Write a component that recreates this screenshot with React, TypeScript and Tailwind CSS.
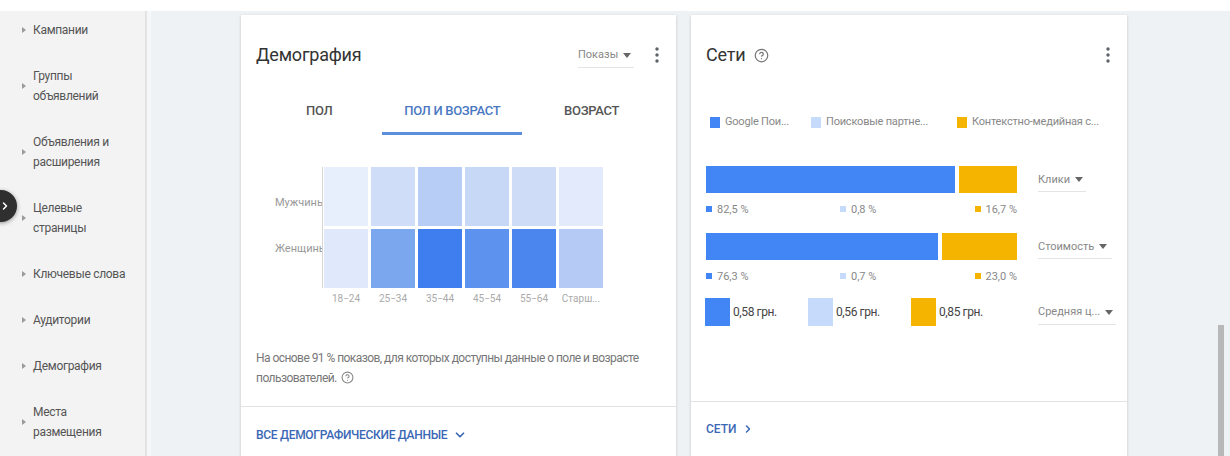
import React from "react";
import { CircleHelp, ChevronDown, ChevronRight } from "lucide-react";

const navItems = [
  ["Кампании"],
  ["Группы", "объявлений"],
  ["Объявления и", "расширения"],
  ["Целевые", "страницы"],
  ["Ключевые слова"],
  ["Аудитории"],
  ["Демография"],
  ["Места", "размещения"],
];

const ages = ["18−24", "25−34", "35−44", "45−54", "55−64", "Старш..."];

const heat = [
  {
    label: "Мужчины",
    pos: "items-end pb-[16px]",
    cells: ["#e7eefc", "#d0ddf8", "#b7cdf5", "#c7d8f7", "#cedcf7", "#e2eafb"],
  },
  {
    label: "Женщины",
    pos: "items-start pt-[13px]",
    cells: ["#e0e9fb", "#7ba7ef", "#3f7eee", "#5e92ef", "#4a86ee", "#b5cbf6"],
  },
];

const BLUE = "#4285f4";
const LIGHT = "#c6dafc";
const YELLOW = "#f4b400";

const bars = [
  { metric: "Клики", values: [80.5, 0.8, 18.7], text: ["82,5 %", "0,8 %", "16,7 %"] },
  { metric: "Стоимость", values: [75, 0.7, 24.3], text: ["76,3 %", "0,7 %", "23,0 %"] },
];

function Kebab() {
  return (
    <svg width="4" height="16" viewBox="0 0 4 16" className="text-[#5f6368]">
      <circle cx="2" cy="2" r="1.7" fill="currentColor" />
      <circle cx="2" cy="8" r="1.7" fill="currentColor" />
      <circle cx="2" cy="14" r="1.7" fill="currentColor" />
    </svg>
  );
}

function Caret() {
  return (
    <svg width="8" height="5" viewBox="0 0 8 5" className="text-[#666] shrink-0">
      <path d="M0 0h8L4 5z" fill="currentColor" />
    </svg>
  );
}

function Dropdown({ label, w }: { label: string; w: string }) {
  return (
    <div className={`flex items-center gap-[5px] border-b border-[#e4e4e4] pb-[3px] text-[11px] text-[#888] ${w}`}>
      <span className="truncate">{label}</span>
      <Caret />
    </div>
  );
}

function Sidebar() {
  return (
    <aside className="w-[147px] shrink-0 bg-[#f3f3f3] border-r-2 border-[#e3e3e3] relative">
      <ul className="-mt-[4px]">
        {navItems.map((lines) => (
          <li key={lines.join(" ")} className="flex items-center py-[13px] pl-[22px]">
            <svg width="4" height="6" viewBox="0 0 4 6" className="mr-[7px] shrink-0 text-[#9a9a9a]">
              <path d="M0 0l4 3-4 3z" fill="currentColor" />
            </svg>
            <div className="text-[12px] leading-[20px] text-[#555] tracking-[-0.3px]">
              {lines.map((l) => (
                <div key={l}>{l}</div>
              ))}
            </div>
          </li>
        ))}
      </ul>
      {/* collapse toggle poking in from the left edge */}
      <div className="absolute -left-[15px] top-[179px] w-[32px] h-[32px] rounded-full bg-[#2f2f2f] shadow-[0_1px_4px_rgba(0,0,0,0.4)] flex items-center justify-end pr-[6px]">
        <ChevronRight size={12} strokeWidth={3} className="text-white" />
      </div>
    </aside>
  );
}

function DemographyCard() {
  return (
    <section className="w-[435px] shrink-0 bg-white shadow-[0_1px_3px_rgba(0,0,0,0.18)] flex flex-col">
      <header className="flex items-center pl-[15px] pr-[17px] pt-[28px]">
        <h2 className="text-[18px] leading-[24px] text-[#333] flex-1 tracking-[-0.2px]">Демография</h2>
        <Dropdown label="Показы" w="w-[56px] mr-[21px] mt-[4px]" />
        <Kebab />
      </header>

      <nav className="flex mt-[20px] px-[15px] text-[13px] leading-[18px] font-medium tracking-[-0.3px]">
        <div className="w-[131px] text-center pt-[14px] pb-[15px] text-[#555]">ПОЛ</div>
        <div className="w-[145px] text-center pt-[14px] pb-[12px] text-[#4a78c2] border-b-[3px] border-[#5b8fdc]">
          ПОЛ И ВОЗРАСТ
        </div>
        <div className="w-[144px] text-center pt-[14px] pb-[15px] text-[#555]">ВОЗРАСТ</div>
      </nav>

      <div className="flex mt-[32px] pl-[34px]">
        <div className="w-[47px] flex flex-col gap-[3px]">
          {heat.map((r) => (
            <div
              key={r.label}
              className={`h-[59px] flex overflow-hidden whitespace-nowrap text-[11px] leading-[14px] text-[#999] ${r.pos}`}
            >
              {r.label}
            </div>
          ))}
        </div>
        <div>
          <div className="border-l border-[#d6d6d6] pl-px flex flex-col gap-[3px]">
            {heat.map((r) => (
              <div key={r.label} className="flex gap-[3px]">
                {r.cells.map((c, i) => (
                  <div key={i} className="w-[44px] h-[59px]" style={{ backgroundColor: c }} />
                ))}
              </div>
            ))}
          </div>
          <div className="flex gap-[3px] pl-[2px] mt-[3px]">
            {ages.map((a) => (
              <div key={a} className="w-[44px] text-center text-[10px] text-[#aaa] whitespace-nowrap overflow-hidden">
                {a}
              </div>
            ))}
          </div>
        </div>
      </div>

      <p className="mt-[42px] px-[15px] text-[12px] leading-[20px] text-[#777] tracking-[-0.55px]">
        На основе 91 % показов, для которых доступны данные о поле и возрасте пользователей.
        <CircleHelp size={13} className="inline-block ml-[4px] -mt-[2px] text-[#888]" />
      </p>

      <div className="mt-[18px] border-t border-[#e2e2e2] px-[15px] pt-[19px] pb-[14px] flex items-center gap-[6px] text-[12px] font-medium text-[#3b68b5] tracking-[-0.3px]">
        ВСЕ ДЕМОГРАФИЧЕСКИЕ ДАННЫЕ
        <ChevronDown size={14} strokeWidth={3} />
      </div>
    </section>
  );
}

function NetworksCard() {
  const legend = [
    [BLUE, "Google Пои...", "w-[101px]"],
    [LIGHT, "Поисковые партне...", "w-[146px]"],
    [YELLOW, "Контекстно-медийная с...", "flex-1"],
  ];
  const avg = [
    [BLUE, "0,58 грн."],
    [LIGHT, "0,56 грн."],
    [YELLOW, "0,85 грн."],
  ];
  return (
    <section className="w-[436px] shrink-0 bg-white shadow-[0_1px_3px_rgba(0,0,0,0.18)] flex flex-col">
      <header className="flex items-center pl-[15px] pr-[17px] pt-[28px]">
        <h2 className="text-[18px] leading-[24px] text-[#333] tracking-[-0.2px]">Сети</h2>
        <CircleHelp size={15} className="ml-[9px] text-[#777]" />
        <div className="flex-1" />
        <Kebab />
      </header>

      <div className="flex items-center mt-[47px] pl-[19px] pr-[10px] text-[11px] text-[#888] tracking-[-0.2px]">
        {legend.map(([c, t, w]) => (
          <div key={t} className={`flex items-center gap-[5px] whitespace-nowrap ${w}`}>
            <span className="w-[10px] h-[11px] shrink-0" style={{ backgroundColor: c }} />
            {t}
          </div>
        ))}
      </div>

      <div className="mt-[35px] pl-[15px] flex flex-col gap-[17px]">
        {bars.map((b) => (
          <div key={b.metric} className="flex">
            <div className="w-[311px]">
              <div className="flex h-[27px] gap-[1px]">
                {b.values.map((v, i) => (
                  <div
                    key={i}
                    style={{ width: `${v}%`, backgroundColor: ["#4285f4", "#ffffff", YELLOW][i] }}
                  />
                ))}
              </div>
              <div className="flex mt-[10px] text-[11px] leading-[13px] text-[#888]">
                {b.text.map((t, i) => (
                  <div
                    key={t}
                    className={`flex items-center gap-[5px] ${i === 0 ? "w-[134px]" : i === 1 ? "flex-1" : ""}`}
                  >
                    <span className="w-[6px] h-[6px]" style={{ backgroundColor: [BLUE, LIGHT, YELLOW][i] }} />
                    {t}
                  </div>
                ))}
              </div>
            </div>
            <div className="ml-[21px] mt-[6px]">
              <Dropdown label={b.metric} w={b.metric === "Клики" ? "w-[48px]" : "w-[74px]"} />
            </div>
          </div>
        ))}

        <div className="flex items-center -mt-[2px]">
          <div className="w-[311px] flex">
            {avg.map(([c, t]) => (
              <div key={t} className="w-[104px] flex items-center gap-[3px] -ml-[1px]">
                <span className="w-[25px] h-[28px]" style={{ backgroundColor: c }} />
                <span className="text-[12px] text-[#444] tracking-[-0.4px]">{t}</span>
              </div>
            ))}
          </div>
          <div className="ml-[21px] mt-[6px]">
            <Dropdown label="Средняя ц..." w="w-[78px]" />
          </div>
        </div>
      </div>

      <div className="mt-[75px] border-t border-[#e2e2e2] px-[15px] pt-[18px] pb-[14px] flex items-center gap-[5px] text-[12px] font-medium text-[#3b68b5]">
        СЕТИ
        <ChevronRight size={12} strokeWidth={3} />
      </div>
    </section>
  );
}

export default function App() {
  return (
    <div className="w-[1230px] h-[456px] overflow-hidden flex flex-col bg-white font-[Roboto,sans-serif]">
      <div className="h-[11px] shrink-0 bg-white" />
      <div className="flex flex-1 min-h-0">
        <Sidebar />
        <main className="flex-1 bg-[#eef2f5] flex pl-[90px] pt-[4px] gap-[15px] border-l-4 border-[#f6f7f8]">
          <DemographyCard />
          <NetworksCard />
          <div className="flex-1 flex justify-end pr-[6px]">
            <div className="w-[6px] self-end h-[131px] bg-[#b8b8b8]" />
          </div>
        </main>
      </div>
    </div>
  );
}
